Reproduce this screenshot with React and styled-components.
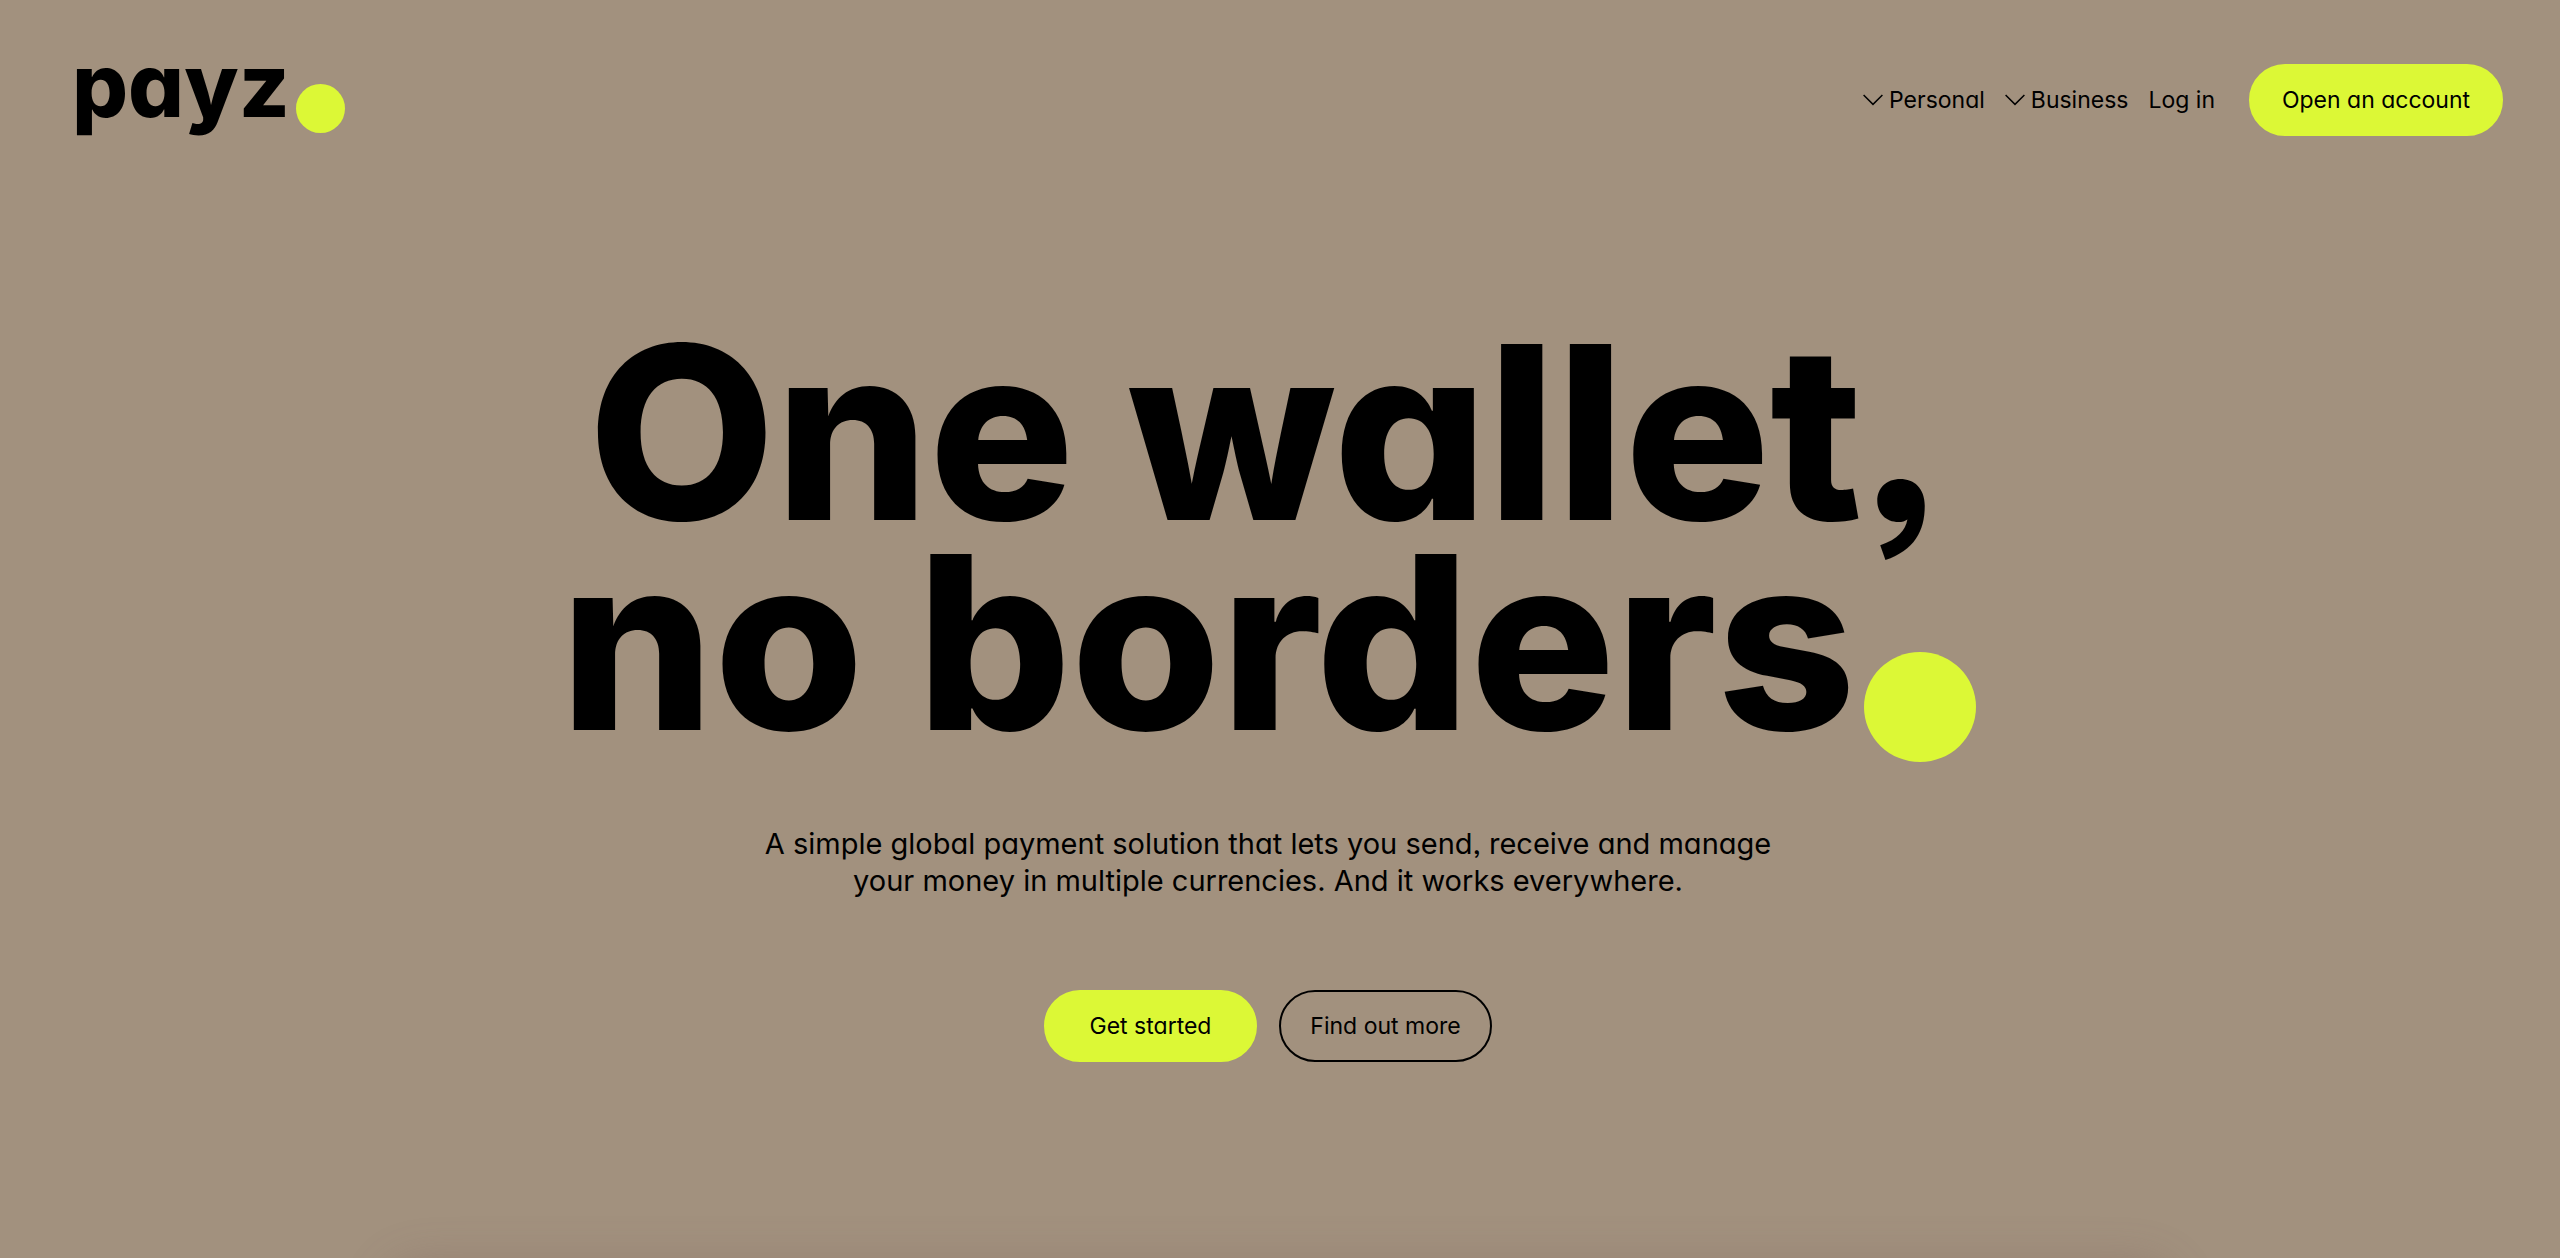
import React from "react";
import styled, { createGlobalStyle } from "styled-components";

const colors = { ground: "#a2917e", ink: "#000", lime: "#dcf836" };

const GlobalStyle = createGlobalStyle`
  *, *::before, *::after { box-sizing: border-box; }
  body {
    margin: 0;
    background: ${colors.ground};
    color: ${colors.ink};
    font-family: Inter, "Liberation Sans", sans-serif;
    font-feature-settings: "cv11" 1, "ss03" 1;
  }
`;

const Page = styled.div`
  display: flex;
  flex-direction: column;
  min-height: 100vh;
  overflow: clip;
`;

const Header = styled.header`
  display: flex;
  justify-content: space-between;
  align-items: center;
  padding: 49px 57px 0 72px;
`;

const Logo = styled.a`
  display: flex;
  align-items: flex-end;
  gap: 6px;
  padding-bottom: 30px;
  color: inherit;
  text-decoration: none;
  font-size: 88px;
  font-weight: 800;
  line-height: 72px;
`;

const Dot = styled.span`
  flex: none;
  width: ${(p) => p.$width}px;
  height: ${(p) => p.$height}px;
  margin-bottom: -${(p) => p.$drop}px;
  border-radius: 50%;
  background: ${colors.lime};
`;

const Nav = styled.nav`
  display: flex;
  align-items: center;
  gap: 20px;
`;

const navItem = `
  display: flex;
  align-items: center;
  gap: 6px;
  padding: 0;
  border: 0;
  background: none;
  color: inherit;
  font: inherit;
  font-feature-settings: inherit;
  font-size: 23px;
  line-height: 32px;
  text-decoration: none;
  cursor: pointer;
`;

const NavButton = styled.button`${navItem}`;
const NavLink = styled.a`${navItem}`;

const Pill = styled.button`
  height: 72px;
  min-width: ${(p) => p.$minWidth}px;
  margin-left: ${(p) => (p.$apart ? 14 : 0)}px;
  padding: 0 28px;
  border: 2px solid ${(p) => (p.$outline ? colors.ink : colors.lime)};
  border-radius: 36px;
  background: ${(p) => (p.$outline ? "transparent" : colors.lime)};
  color: ${colors.ink};
  font: inherit;
  font-feature-settings: inherit;
  font-size: 23px;
  line-height: 32px;
  cursor: pointer;
`;

const Hero = styled.main`
  flex: 1;
  display: flex;
  flex-direction: column;
  align-items: center;
  padding: 176px 24px 0 0;
  text-align: center;
`;

const Title = styled.h1`
  margin: 0;
  font-size: 242px;
  font-weight: 800;
  line-height: 210px;
`;

const TitleLine = styled.span`
  display: flex;
  justify-content: center;
  align-items: flex-end;
  gap: 8px;
  white-space: nowrap;
`;

const Lead = styled.p`
  margin: 78px 0 0;
  font-size: 29px;
  line-height: 37px;
`;

const Actions = styled.div`
  display: flex;
  gap: 22px;
  margin-top: 91px;
`;

const NextPanel = styled.section`
  width: 70%;
  height: 200px;
  margin: 0 auto -200px;
  border-radius: 40px;
  box-shadow: 0 4px 44px rgba(120, 90, 90, 0.3);
`;

const Chevron = () => (
  <svg width="20" height="12" viewBox="0 0 20 12" fill="none" stroke="currentColor" strokeWidth="1.5" aria-hidden="true">
    <path d="M0.6 1 L10 10.4 L19.4 1" />
  </svg>
);

export default function App() {
  return (
    <>
      <GlobalStyle />
      <Page>
        <Header>
          <Logo href="#">
            payz
            <Dot $width={49} $height={49} $drop={12} />
          </Logo>
          <Nav>
            <NavButton type="button"><Chevron />Personal</NavButton>
            <NavButton type="button"><Chevron />Business</NavButton>
            <NavLink href="#login">Log in</NavLink>
            <Pill type="button" $minWidth={254} $apart>Open an account</Pill>
          </Nav>
        </Header>
        <Hero>
          <Title>
            <TitleLine>One wallet,</TitleLine>
            <TitleLine>
              no borders
              <Dot $width={112} $height={110} $drop={15} />
            </TitleLine>
          </Title>
          <Lead>
            A simple global payment solution that lets you send, receive and manage
            <br />
            your money in multiple currencies. And it works everywhere.
          </Lead>
          <Actions>
            <Pill type="button" $minWidth={213}>Get started</Pill>
            <Pill type="button" $minWidth={213} $outline>Find out more</Pill>
          </Actions>
        </Hero>
        <NextPanel />
      </Page>
    </>
  );
}
